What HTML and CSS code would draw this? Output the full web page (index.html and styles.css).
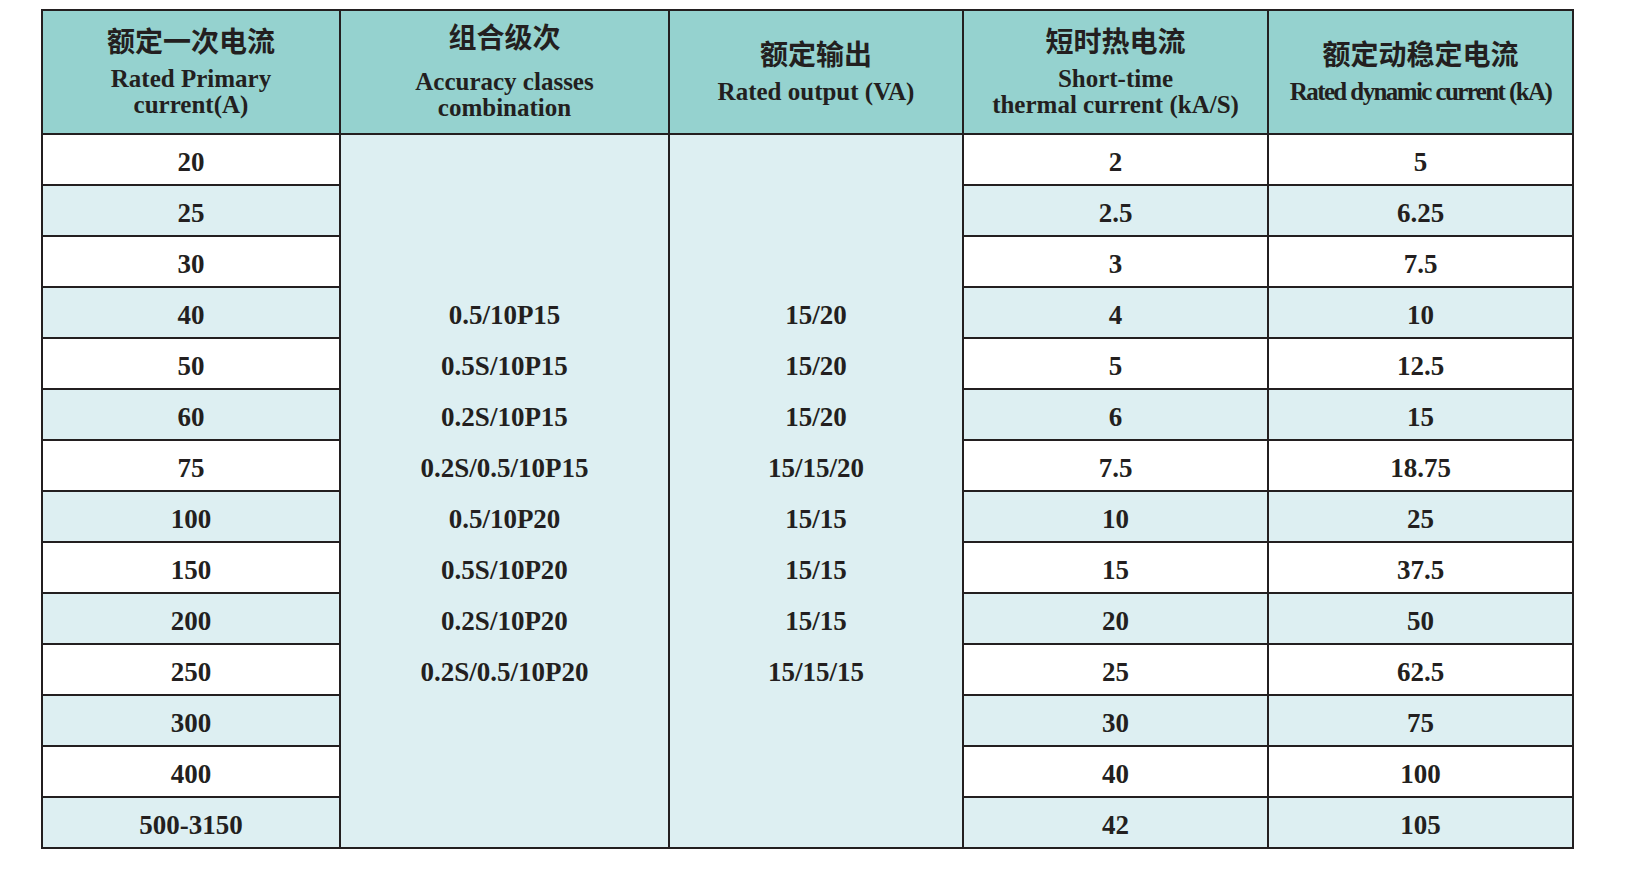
FILE: index.html
```html
<!DOCTYPE html>
<html lang="zh-CN">
<head>
<meta charset="utf-8">
<title>额定参数表</title>
<link rel="stylesheet" href="styles.css">
</head>
<body>
<div class="spec">
  <div class="head">
    <div class="zh">额定一次电流</div>
    <div class="en">Rated Primary</div>
    <div class="en">current(A)</div>
  </div>
  <div class="head">
    <div class="zh zh-wide">组合级次</div>
    <div class="en">Accuracy classes</div>
    <div class="en">combination</div>
  </div>
  <div class="head">
    <div class="zh">额定输出</div>
    <div class="en">Rated output (VA)</div>
  </div>
  <div class="head">
    <div class="zh">短时热电流</div>
    <div class="en">Short-time</div>
    <div class="en">thermal current (kA/S)</div>
  </div>
  <div class="head">
    <div class="zh">额定动稳定电流</div>
    <div class="en en-tight">Rated dynamic current (kA)</div>
  </div>

  <div class="cell">20</div>
  <div class="merged">
    <div class="line">0.5/10P15</div>
    <div class="line">0.5S/10P15</div>
    <div class="line">0.2S/10P15</div>
    <div class="line">0.2S/0.5/10P15</div>
    <div class="line">0.5/10P20</div>
    <div class="line">0.5S/10P20</div>
    <div class="line">0.2S/10P20</div>
    <div class="line">0.2S/0.5/10P20</div>
  </div>
  <div class="merged">
    <div class="line">15/20</div>
    <div class="line">15/20</div>
    <div class="line">15/20</div>
    <div class="line">15/15/20</div>
    <div class="line">15/15</div>
    <div class="line">15/15</div>
    <div class="line">15/15</div>
    <div class="line">15/15/15</div>
  </div>
  <div class="cell">2</div>
  <div class="cell">5</div>

  <div class="cell alt">25</div>
  <div class="cell alt">2.5</div>
  <div class="cell alt">6.25</div>

  <div class="cell">30</div>
  <div class="cell">3</div>
  <div class="cell">7.5</div>

  <div class="cell alt">40</div>
  <div class="cell alt">4</div>
  <div class="cell alt">10</div>

  <div class="cell">50</div>
  <div class="cell">5</div>
  <div class="cell">12.5</div>

  <div class="cell alt">60</div>
  <div class="cell alt">6</div>
  <div class="cell alt">15</div>

  <div class="cell">75</div>
  <div class="cell">7.5</div>
  <div class="cell">18.75</div>

  <div class="cell alt">100</div>
  <div class="cell alt">10</div>
  <div class="cell alt">25</div>

  <div class="cell">150</div>
  <div class="cell">15</div>
  <div class="cell">37.5</div>

  <div class="cell alt">200</div>
  <div class="cell alt">20</div>
  <div class="cell alt">50</div>

  <div class="cell">250</div>
  <div class="cell">25</div>
  <div class="cell">62.5</div>

  <div class="cell alt">300</div>
  <div class="cell alt">30</div>
  <div class="cell alt">75</div>

  <div class="cell">400</div>
  <div class="cell">40</div>
  <div class="cell">100</div>

  <div class="cell alt">500-3150</div>
  <div class="cell alt">42</div>
  <div class="cell alt">105</div>
</div>
</body>
</html>
```

FILE: styles.css
```css
html, body {
  margin: 0;
  padding: 0;
  background: #ffffff;
}

body {
  font-family: "Liberation Serif", "Times New Roman", "Noto Sans CJK SC", serif;
  color: #231f20;
}

.spec {
  display: grid;
  grid-template-columns: 296px 327px 292px 303px 303px;
  grid-template-rows: 122px repeat(14, 49px);
  gap: 2px;
  padding: 2px;
  background: #231f20;
  width: max-content;
  margin: 9px 0 0 41px;
}

.head {
  background: #95d2cf;
  display: flex;
  flex-direction: column;
  align-items: center;
  justify-content: center;
  padding-bottom: 5px;
  box-sizing: border-box;
}

.zh {
  font-family: "Noto Sans CJK SC", sans-serif;
  font-weight: 700;
  font-size: 28px;
  line-height: 36px;
  margin-bottom: 8px;
}

.zh-wide {
  margin-bottom: 15px;
}

.en {
  font-family: "Liberation Serif", "Times New Roman", serif;
  font-weight: 700;
  font-size: 25px;
  line-height: 26px;
  white-space: nowrap;
}

.en-tight {
  letter-spacing: -1.6px;
}

.cell {
  background: #ffffff;
  font-weight: 700;
  font-size: 27px;
  display: flex;
  align-items: center;
  justify-content: center;
  padding-top: 5px;
  box-sizing: border-box;
}

.cell.alt {
  background: #ddeff2;
}

.merged {
  grid-row: span 14;
  background: #ddeff2;
  display: flex;
  flex-direction: column;
  gap: 2px;
  padding-top: 153px;
  box-sizing: border-box;
}

.line {
  height: 49px;
  font-weight: 700;
  font-size: 27px;
  display: flex;
  align-items: center;
  justify-content: center;
  padding-top: 5px;
  box-sizing: border-box;
}
```
